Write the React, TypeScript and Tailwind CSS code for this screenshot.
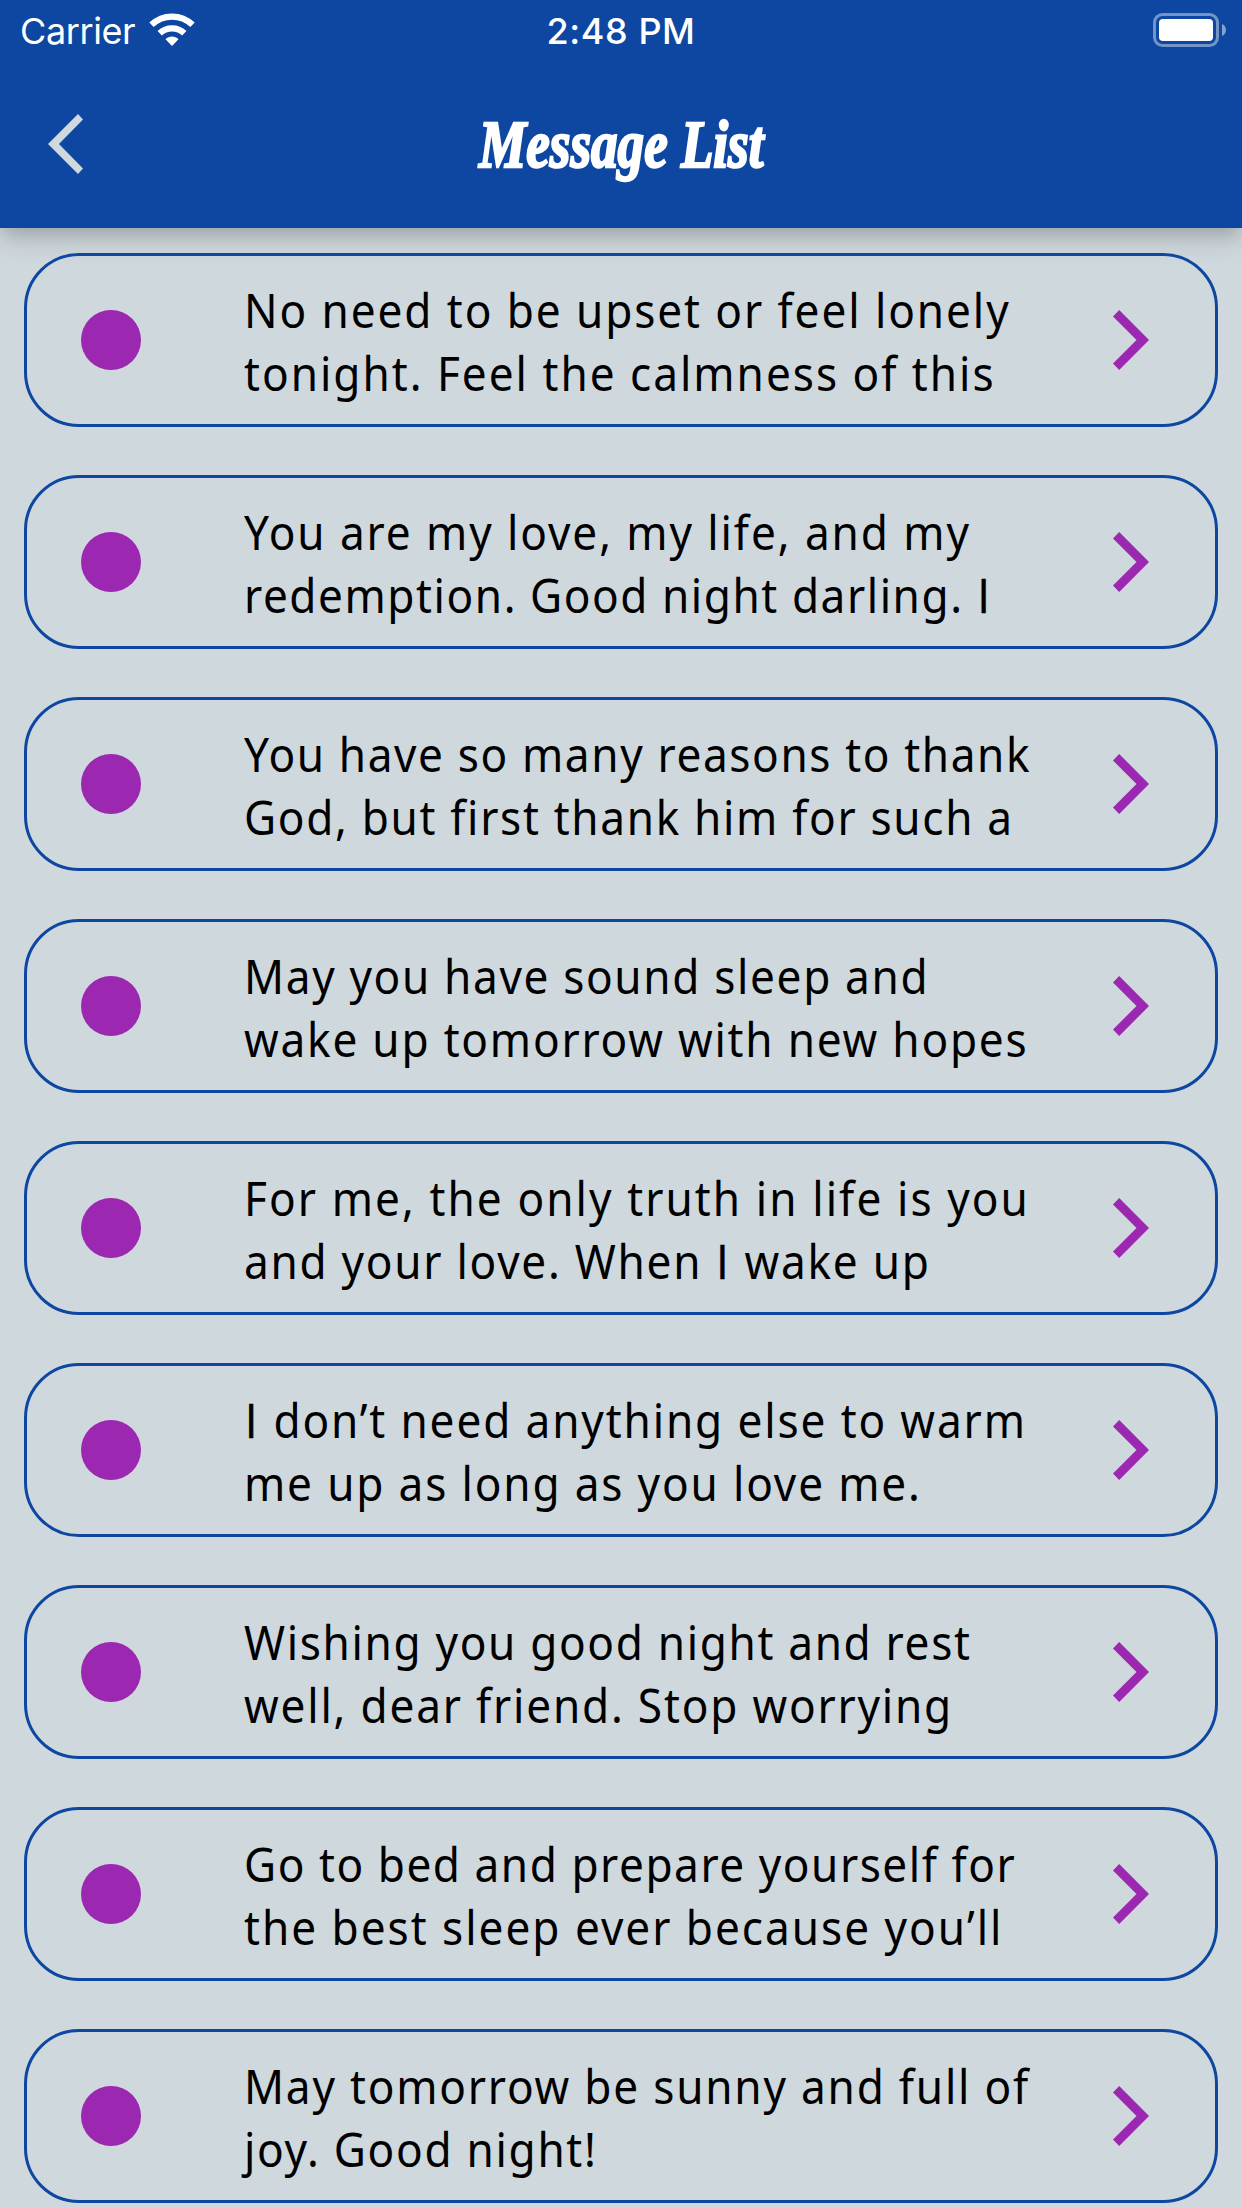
import { useLayoutEffect, useRef, useState } from "react";

type Line = { text: string; width: number };

const messages: [Line, Line][] = [
  [{ text: "No need to be upset or feel lonely", width: 765 }, { text: "tonight. Feel the calmness of this", width: 750 }],
  [{ text: "You are my love, my life, and my", width: 725 }, { text: "redemption. Good night darling. I", width: 747 }],
  [{ text: "You have so many reasons to thank", width: 786 }, { text: "God, but first thank him for such a", width: 768 }],
  [{ text: "May you have sound sleep and", width: 684 }, { text: "wake up tomorrow with new hopes", width: 783 }],
  [{ text: "For me, the only truth in life is you", width: 784 }, { text: "and your love. When I wake up", width: 685 }],
  [{ text: "I don’t need anything else to warm", width: 781 }, { text: "me up as long as you love me.", width: 676 }],
  [{ text: "Wishing you good night and rest", width: 726 }, { text: "well, dear friend. Stop worrying", width: 707 }],
  [{ text: "Go to bed and prepare yourself for", width: 771 }, { text: "the best sleep ever because you’ll", width: 757 }],
  [{ text: "May tomorrow be sunny and full of", width: 784 }, { text: "joy. Good night!", width: 352 }],
];

const SQUEEZE = 0.92;

/** One line of text whose tracking is adjusted so that it fills the given width. */
function FittedLine({ text, width }: Line) {
  const ref = useRef<HTMLSpanElement>(null);
  const [tracking, setTracking] = useState(0);
  useLayoutEffect(() => {
    if (ref.current) {
      setTracking((width / SQUEEZE - ref.current.offsetWidth) / (text.length - 1));
    }
  }, [text, width]);
  return (
    <span className="block h-[63px] whitespace-nowrap">
      <span ref={ref} className="inline-block origin-left scale-x-[0.92]" style={{ letterSpacing: tracking }}>
        {text.split(/(\bI\b)/).map((part, i) =>
          part === "I" ? (
            <span
              key={i}
              className="px-[1px] font-['Open_Sans',sans-serif] leading-none [-webkit-text-stroke:0.6px_black]"
            >
              I
            </span>
          ) : (
            part
          ),
        )}
      </span>
    </span>
  );
}

function StatusBar() {
  return (
    <div className="grid h-[60px] grid-cols-3 items-center pt-[2px] font-['Inter',sans-serif] text-[36px] leading-[60px] text-white">
      <div className="flex items-center pl-[20px]">
        <span className="mt-[-1px] w-[115px] whitespace-nowrap tracking-[-0.4px]">Carrier</span>
        <svg className="ml-[14px] mt-[-4px] h-[34px] w-[46px]" viewBox="0 0 46 34" fill="none" stroke="white">
          <path d="M2.500 11.800 C14 .800 32 .800 43.500 11.800" strokeWidth="6.3" />
          <path d="M10.700 20.200 C17.500 13.800 28.500 13.800 35.300 20.200" strokeWidth="6.3" />
          <path d="M16.500 26.300 C20 22.600 26 22.600 29.500 26.300 L23 33 Z" fill="white" stroke="none" />
        </svg>
      </div>
      <span className="mt-[-2px] text-center font-medium tracking-[0.6px]">2:48 PM</span>
      <svg className="mt-[-4px] mr-[15px] h-[34px] w-[74px] justify-self-end" viewBox="0 0 74 34">
        <rect x="1.5" y="1.5" width="63" height="31" rx="8" fill="none" stroke="white" strokeOpacity=".42" strokeWidth="3" />
        <rect x="6" y="6" width="54" height="22" rx="4" fill="white" />
        <path d="M69 11 C74.300 13 74.300 21 69 23 Z" fill="white" fillOpacity=".5" />
      </svg>
    </div>
  );
}

export default function App() {
  return (
    <div className="flex h-[2208px] w-[1242px] flex-col overflow-hidden bg-[#cfd8dc]">
      <header className="h-[228px] shrink-0 bg-[#0d47a1] shadow-[0_8px_16px_-3px_rgba(0,0,0,0.14),0_12px_26px_0_rgba(0,0,0,0.13)]">
        <StatusBar />
        <div className="grid h-[168px] grid-cols-[1fr_auto_1fr] items-center">
          <svg className="ml-[48px] h-[60px] w-[35px]" viewBox="0 0 35 60" fill="#cfd8dc">
            <path d="M30 0 L35 5.500 L11 30 L35 54.500 L30 60 L0 30 Z" />
          </svg>
          <h1 className="flex w-[288px] justify-center whitespace-nowrap font-['Liberation_Serif',serif] text-[68px] leading-none font-bold text-white italic">
            <span className="scale-x-[0.78] [-webkit-text-stroke:2.5px_white]">Message List</span>
          </h1>
        </div>
      </header>
      <main className="flex flex-col gap-[48px] px-[24px] pt-[25px]">
        {messages.map(([first, second]) => (
          <article
            key={first.text}
            className="flex h-[174px] shrink-0 items-center rounded-[55px] border-[3px] border-[#0d47a1] pr-[66px] pl-[54px]"
          >
            <span className="size-[60px] shrink-0 rounded-full bg-[#9c27b0]" />
            <p className="ml-[103px] flex-1 pt-[1px] font-['Noto_Sans',sans-serif] text-[48px] leading-[63px] text-black">
              <FittedLine {...first} />
              <FittedLine {...second} />
            </p>
            <svg className="h-[60px] w-[36px] shrink-0" viewBox="0 0 36 60" fill="#9c27b0">
              <path d="M6.200 0 L0 6.500 L23.500 30 L0 53.500 L6.200 60 L36 30 Z" />
            </svg>
          </article>
        ))}
      </main>
    </div>
  );
}
